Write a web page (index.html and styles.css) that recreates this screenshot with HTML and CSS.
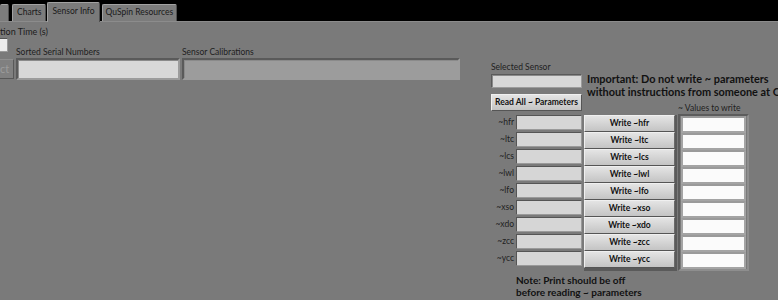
FILE: index.html
```html
<!DOCTYPE html>
<html>
<head>
<meta charset="utf-8">
<link rel="stylesheet" href="styles.css">
</head>
<body>
<div class="screen">
  <div class="tabbar">
    <div class="tab stub"></div>
    <div class="tab charts">Charts</div>
    <div class="tab active">Sensor Info</div>
    <div class="tab">QuSpin Resources</div>
  </div>
  <div class="panel">
    <div class="left">
      <div class="time-label">tion Time (s)</div>
      <div class="left-grid">
        <div class="time-box"></div>
        <div class="lbl end">Sorted Serial Numbers</div>
        <div class="lbl end">Sensor Calibrations</div>
        <div class="ghost-btn">ct</div>
        <div class="field light"></div>
        <div class="field dim"></div>
      </div>
    </div>
    <div class="right">
      <div class="top">
        <div class="sel">
          <div class="lbl">Selected Sensor</div>
          <div class="field light sel-field"></div>
          <div class="btn readall">Read All ~ Parameters</div>
        </div>
        <div class="warn">
          <p class="warn-text">Important: Do not write ~ parameters<br>without instructions from someone at QuSpin</p>
          <div class="lbl values">~ Values to write</div>
        </div>
      </div>
      <div class="table">
        <div class="names">
          <div class="name">~hfr</div>
          <div class="name">~ltc</div>
          <div class="name">~lcs</div>
          <div class="name">~lwl</div>
          <div class="name">~lfo</div>
          <div class="name">~xso</div>
          <div class="name">~xdo</div>
          <div class="name">~zcc</div>
          <div class="name">~ycc</div>
        </div>
        <div class="reads">
          <div class="read"></div>
          <div class="read"></div>
          <div class="read"></div>
          <div class="read"></div>
          <div class="read"></div>
          <div class="read"></div>
          <div class="read"></div>
          <div class="read"></div>
          <div class="read"></div>
        </div>
        <div class="writes">
          <div class="btn write">Write ~hfr</div>
          <div class="btn write">Write ~ltc</div>
          <div class="btn write">Write ~lcs</div>
          <div class="btn write">Write ~lwl</div>
          <div class="btn write">Write ~lfo</div>
          <div class="btn write">Write ~xso</div>
          <div class="btn write">Write ~xdo</div>
          <div class="btn write">Write ~zcc</div>
          <div class="btn write">Write ~ycc</div>
        </div>
        <div class="inputs">
          <div class="input"></div>
          <div class="input"></div>
          <div class="input"></div>
          <div class="input"></div>
          <div class="input"></div>
          <div class="input"></div>
          <div class="input"></div>
          <div class="input"></div>
          <div class="input"></div>
        </div>
      </div>
      <div class="note">Note: Print should be off<br>before reading ~ parameters</div>
    </div>
  </div>
</div>
</body>
</html>
```
FILE: styles.css
```css
* { box-sizing: border-box; }
html, body { margin: 0; padding: 0; }
body {
  width: 778px;
  height: 300px;
  overflow: hidden;
  background: #7a7a7a;
  font-family: Lato, "Liberation Sans", sans-serif;
  color: #1c1c1c;
}
.screen { width: 778px; height: 300px; overflow: hidden; }

.tabbar {
  height: 21px;
  background: #000;
  display: flex;
  align-items: flex-end;
}
.tab {
  height: 17px;
  background: #7c7c7c;
  border: 1px solid #a2a2a2;
  border-bottom: none;
  border-right-color: #505050;
  border-radius: 2px 2px 0 0;
  font-size: 8.5px;
  line-height: 15px;
  padding: 0 3px;
  margin-right: 2px;
  color: #1a1a1a;
  white-space: nowrap;
}
.tab.stub { width: 9px; padding: 0; margin-right: 3px; border-left: none; }
.tab.charts { margin-right: 1px; padding: 0 4px; }
.tab.active {
  height: 20px;
  margin-bottom: -1px;
  background: #7a7a7a;
  line-height: 16px;
  padding: 0 4px;
  position: relative;
}

.panel {
  display: flex;
  border-top: 1px solid #8c8c8c;
  height: 279px;
}
.left { width: 491px; flex: none; }
.lbl { font-size: 8.5px; line-height: 10px; white-space: nowrap; color: #1e1e1e; }
.lbl.end { align-self: end; line-height: 11px; }
.time-label { font-size: 9px; line-height: 10px; margin-top: 5px; }
.left-grid {
  display: grid;
  grid-template-columns: 14px 164px 278px;
  grid-template-rows: 21px 22px;
  column-gap: 2px;
}
.time-box {
  width: 8px;
  height: 14px;
  margin-top: 1px;
  background: #ececec;
  border: 1px solid #555;
  border-left: none;
  border-right-color: #9a9a9a;
  border-bottom-color: #9a9a9a;
}
.ghost-btn {
  height: 20px;
  margin-top: 1px;
  background: #808080;
  border: 1px solid #8e8e8e;
  border-left: none;
  border-right-color: #585858;
  border-bottom-color: #585858;
  font-size: 11px;
  line-height: 18px;
  color: #9c9c9c;
  overflow: hidden;
}
.field {
  height: 22px;
  border: 2px solid #5a5a5a;
  border-right-color: #9c9c9c;
  border-bottom-color: #9c9c9c;
  box-shadow: inset 1px 1px 0 #8a8a8a;
}
.field.light { background: #d8d8d8; }
.field.dim { background: #9c9c9c; }

.right { width: 287px; flex: none; padding-top: 40px; }
.top { display: flex; }
.sel { width: 91px; flex: none; display: flex; flex-direction: column; }
.sel-field { height: 14px; margin-top: 2px; border-width: 1px; }
.btn {
  background: linear-gradient(#e4e4e4, #c4c4c4);
  border: 1px solid #f0f0f0;
  border-right-color: #555;
  border-bottom-color: #555;
  font-weight: 700;
  color: #111;
  text-align: center;
  white-space: nowrap;
}
.readall {
  height: 17px;
  margin-top: 6px;
  font-size: 8.5px;
  line-height: 15px;
}
.warn { margin-left: 5px; flex: none; }
.warn-text {
  margin: 10px 0 0;
  font-size: 10.9px;
  line-height: 13px;
  font-weight: 700;
  color: #111;
  white-space: nowrap;
}
.values { margin-top: 5px; margin-left: 91px; }

.table {
  display: grid;
  grid-template-columns: 25px 68px 94px 71px;
  margin-top: 2px;
}
.names, .reads, .writes, .inputs { display: flex; flex-direction: column; }
.name {
  height: 17px;
  font-size: 8.5px;
  line-height: 15px;
  text-align: right;
  padding-right: 2px;
  color: #1e1e1e;
}
.read {
  width: 66px;
  height: 15px;
  margin-bottom: 2px;
  background: #d6d6d6;
  border: 1px solid #555;
  border-right-color: #9a9a9a;
  border-bottom-color: #9a9a9a;
}
.writes {
  width: 93px;
  border-right: 2px solid #5a5a5a;
  border-bottom: 2px solid #5a5a5a;
  background: #5a5a5a;
}
.write {
  height: 17px;
  font-size: 8.5px;
  line-height: 15px;
  border-right-color: #6a6a6a;
}
.inputs {
  border: 2px solid #5c5c5c;
  border-right-color: #8e8e8e;
  border-bottom-color: #8e8e8e;
  padding: 0 1px 0 1px;
  margin-top: -1px;
}
.input {
  height: 17px;
  background: #fbfbfb;
  border: 2px solid #a4a4a4;
  border-top-color: #9a9a9a;
}
.note {
  margin: 3px 0 0 25px;
  font-size: 10px;
  line-height: 12px;
  font-weight: 700;
  color: #111;
}
```
